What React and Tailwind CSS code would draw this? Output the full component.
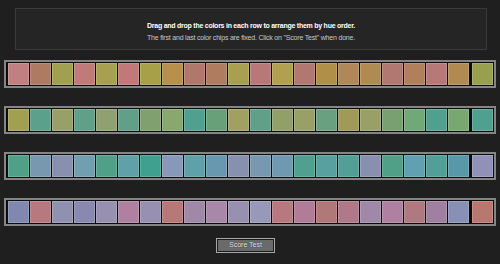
import React from "react";

const rows = [
  ["#c08080","#ae7a62","#a0a050","#c07a78","#a8a050","#c07878","#a8a048","#b8904c","#b07868","#b07c60","#a8a050","#b87878","#b0a050","#b07870","#b09048","#b08858","#b08a50","#b07870","#b0805c","#b87878","#b08a50","#98a050"],
  ["#a0a050","#5aa08a","#98a068","#60a088","#90a070","#60a088","#80a070","#88a870","#50a090","#68a07a","#a0a060","#60a088","#90a068","#98a068","#68a080","#a09a58","#98a068","#78a070","#70a878","#50a090","#78a870","#50a090"],
  ["#50a088","#7898b0","#8890b0","#70a0b0","#50a088","#60a0a8","#40a090","#8898b8","#60a0a8","#6898b0","#8890b0","#7898b0","#7098b0","#50a090","#58a0a0","#50a098","#8890b0","#50a088","#60a0b0","#50a098","#5898a8","#9090b8"],
  ["#8088b0","#b87880","#9090b0","#8888b0","#9890b0","#b080a0","#9890b0","#b87878","#a088a8","#a888a8","#9890b0","#9898b8","#b87880","#b07c98","#b07878","#b07888","#a088a8","#b080a0","#b07880","#a080a0","#8890b8","#b87870"],
];

function Row({ colors }) {
  return (
    <div className="flex items-center gap-px border-2 border-[#858585] bg-[#0c0c0c] p-px pl-[2px]">
      {colors.map((c, i) => (
        <div
          key={i}
          className={`h-[22px] w-[21px] shrink-0 shadow-[inset_0_0_0_1px_rgba(255,255,255,0.18)] ${i === colors.length - 1 ? "ml-[2px]" : ""}`}
          style={{ backgroundColor: c }}
        />
      ))}
    </div>
  );
}

export default function App() {
  return (
    <div className="h-[264px] w-[500px] bg-[#1f1f1f] font-['Liberation_Sans',Arial,sans-serif] overflow-hidden">
      <div className="pt-[8px] px-[15px] pr-[13px]">
        <div className="h-[42px] border border-[#3a3a3a] bg-[#252525] flex flex-col items-center pt-[12px]">
          <div className="text-[7px] leading-[9px] font-bold text-white tracking-[-0.25px]">
            Drag and drop the colors in each row to arrange them by hue order.
          </div>
          <div className="mt-[3px] text-[7px] leading-[9px] text-[#c8c8c8] tracking-[-0.2px]">
            The first and last color chips are fixed. Click on "Score Test" when done.
          </div>
        </div>
      </div>
      <div className="mt-[10px] pl-[4px] flex flex-col gap-[18px]">
        {rows.map((r, i) => (
          <div key={i} className="flex">
            <Row colors={r} />
          </div>
        ))}
      </div>
      <div className="flex justify-center mt-[12px] pr-[9px]">
        <div className="w-[59px] h-[15px] border border-[#a8a8a8] bg-[#1a1a1a] p-px">
          <div className="h-full w-full bg-[#6a6a6a] flex items-center justify-center text-[7px] text-[#f0f0f0] [text-shadow:0_0_1px_#000]">
            Score Test
          </div>
        </div>
      </div>
    </div>
  );
}
